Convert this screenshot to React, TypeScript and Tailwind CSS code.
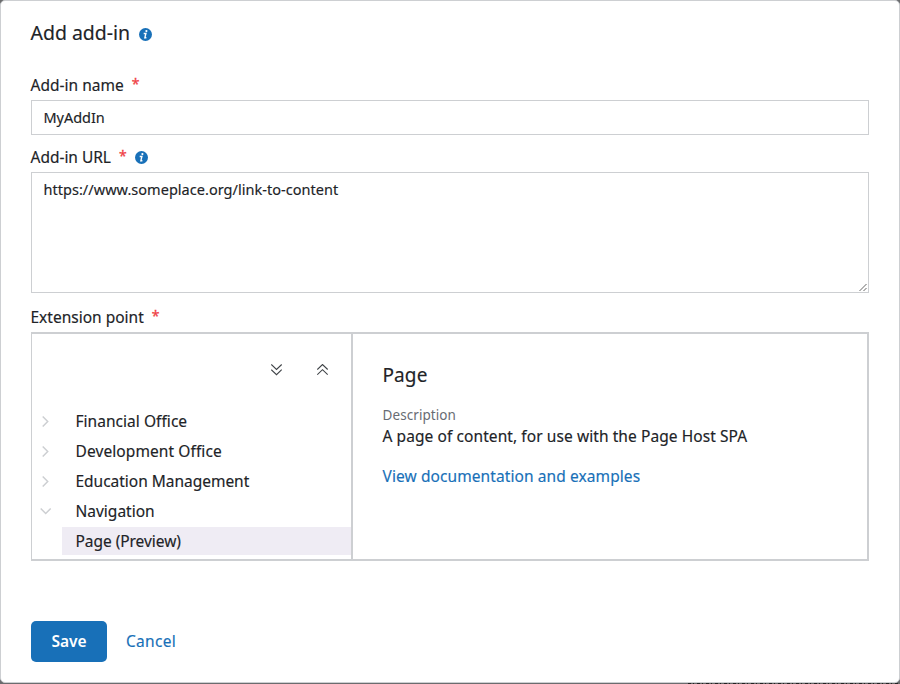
import React from "react";

function InfoIcon() {
  return (
    <svg width="13" height="13" viewBox="0 0 13 13" className="block shrink-0">
      <circle cx="6.5" cy="6.5" r="6.5" fill="#1870b8" />
      <circle cx="7.4" cy="3.1" r="1.1" fill="#fff" />
      <path d="M4.700 5.500h2.200l-1 4.200h1.500" fill="none" stroke="#fff" strokeWidth="1.400" />
    </svg>
  );
}

function Chevron({ open }: { open?: boolean }) {
  return (
    <svg width="12" height="12" viewBox="0 0 12 12" fill="none" stroke="#cdcfd2" strokeWidth="1.5" className="block shrink-0">
      <path d={open ? "M0.700 3.500l5 5 5-5" : "M2.700 1.500l5 5-5 5"} />
    </svg>
  );
}

function DoubleChevron({ up }: { up?: boolean }) {
  return (
    <svg width="12" height="12" viewBox="0 0 12 12" fill="none" stroke="#3f4347" strokeWidth="1.1" className="block shrink-0">
      <path d={up ? "M0.300 5.500L5.500 0.500l5.200 5M0.300 10.700L5.500 5.700l5.200 5" : "M0.300 0.500L5.500 5.500l5.200-5M0.300 5.700L5.500 10.700l5.200-5"} />
    </svg>
  );
}

function Star() {
  return <span className="ml-[8px] mt-[-2px] text-[14px] leading-6 text-[#ef4044] [-webkit-text-stroke:0.3px_currentColor]">*</span>;
}

const items = [
  { name: "Financial Office", cls: "tracking-[0.04px]" },
  { name: "Development Office", cls: "tracking-[0.09px]" },
  { name: "Education Management", cls: "tracking-[-0.02px]" },
  { name: "Navigation", cls: "tracking-[0px]", open: true },
];

export default function App() {
  return (
    <div className="relative h-[684px] w-[900px] overflow-hidden bg-[#6b6c6e] font-['Noto_Sans',sans-serif] text-[15.500px] text-[#212327] [-webkit-text-stroke:0.15px_currentColor]">
      <div className="absolute bottom-0 left-[688px] h-px w-[212px] bg-[repeating-linear-gradient(90deg,#222_0_3px,#666_3px_5px,#222_5px_6px,#666_6px_9px)]" />
      <div className="relative flex h-[683px] flex-col rounded-[5px] border border-[#cdcfd2] bg-white px-[30px]">
        <div className="mt-[17px] flex h-[30px] items-center">
          <h1 className="-ml-[0.5px] text-[19.500px] leading-[30px] tracking-[-0.02px]">Add add-in</h1>
          <span className="ml-[9px] mt-[2px]"><InfoIcon /></span>
        </div>
        <div className="mt-[25px] flex h-6 items-center">
          <label className="-ml-[0.5px] mt-[2px] tracking-[0.02px]">Add-in name</label><Star />
        </div>
        <div className="mt-[3px] flex h-[35px] shrink-0 items-center border border-[#cdcfd2] px-[11.500px] text-[14.500px] tracking-[-0.05px]">
          MyAddIn
        </div>
        <div className="mt-[10px] flex h-6 items-center">
          <label className="-ml-[0.5px] mt-[2px] tracking-[-0.02px]">Add-in URL</label><Star />
          <span className="ml-[8.500px]"><InfoIcon /></span>
        </div>
        <div className="mt-[3px] flex h-[121px] shrink-0 items-start justify-between border border-[#cdcfd2] pl-[11.500px] text-[14.500px]">
          <span className="mt-[6px] leading-5 tracking-[0.03px]">https://www.someplace.org/link-to-content</span>
          <svg width="9" height="9" viewBox="0 0 9 9" className="self-end" stroke="#666" strokeWidth="1" fill="none">
            <path d="M0.500 8l7-7M4.500 8l3-3" />
          </svg>
        </div>
        <div className="mt-[12px] flex h-6 items-center">
          <label className="-ml-[0.5px] mt-[2px] tracking-[0px]">Extension point</label><Star />
        </div>
        <div className="mt-[3px] flex h-[229px] shrink-0 border-y-2 border-l border-r-2 border-[#cdcfd2]">
          <div className="w-[321px] border-r-2 border-[#cdcfd2]">
            <div className="mt-[30px] flex h-3 gap-[34px] pl-[239px]">
              <DoubleChevron />
              <DoubleChevron up />
            </div>
            <div className="mt-[30px]">
              {items.map((it) => (
                <div key={it.name} className="flex h-[30px] items-center pl-[8px]">
                  <Chevron open={it.open} />
                  <span className={"ml-[23.500px] mt-[2px] " + it.cls}>{it.name}</span>
                </div>
              ))}
              <div className="ml-[30px] mt-px flex h-7 items-center bg-[#efecf4] pl-[13.500px] pt-[2px] tracking-[-0.05px]">Page (Preview)</div>
            </div>
          </div>
          <div className="pl-[29.500px] pt-[26px]">
            <h2 className="text-[19px] leading-[30px] tracking-[0.1px]">Page</h2>
            <div className="mt-[14px] text-[13.500px] leading-[22px] tracking-[0.08px] text-[#686c73] [-webkit-text-stroke:0px]">Description</div>
            <div className="-mt-px leading-[22px] tracking-[0.08px]">A page of content, for use with the Page Host SPA</div>
            <div className="mt-[18px] leading-[22px] tracking-[0.09px] text-[#1870b8]">View documentation and examples</div>
          </div>
        </div>
        <div className="mt-[60px] flex h-[41px] items-center">
          <button className="h-[41px] w-[76px] rounded-[5px] bg-[#1870b8] font-semibold text-white [-webkit-text-stroke:0px]">Save</button>
          <button className="ml-[19px] tracking-[0.3px] text-[#1870b8]">Cancel</button>
        </div>
      </div>
    </div>
  );
}
